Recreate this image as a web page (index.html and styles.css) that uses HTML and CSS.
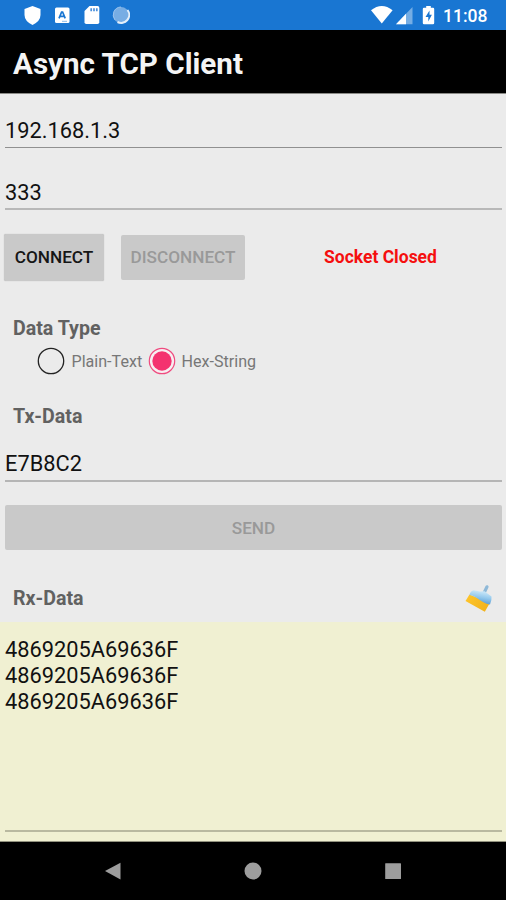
FILE: index.html
```html
<!DOCTYPE html>
<html lang="en">
<head>
<meta charset="utf-8">
<title>Async TCP Client</title>
<link rel="stylesheet" href="styles.css">
</head>
<body>
<div class="status-bar">
  <svg class="status-left" width="110" height="30" viewBox="0 0 110 30">
    <path d="M12.5 6 20.5 9v6q0 6-8 10-8-4-8-10V9z" fill="#fff"/>
    <rect x="35" y="7.500" width="14.5" height="15.500" rx="1.5" fill="#fff"/>
    <path d="M39 18.400 41.600 12h1l2.600 6.400M40 16.400h4.200" fill="none" stroke="#1976d2" stroke-width="1.7"/>
    <path d="M42 21.3h5" stroke="#8dbbe8" stroke-width="1"/>
    <path d="M69.500 6h8q1.800 0 1.800 1.800v14.400q0 1.800-1.800 1.800H66.300q-1.800 0-1.800-1.800V11z" fill="#fff"/>
    <path d="M71.200 8.300v3M74 8.300v3M76.800 8.300v3" stroke="#4a90dc" stroke-width="1.700"/>
    <circle cx="101" cy="15" r="8" fill="#77ade4"/>
    <path d="M107.500 10a8 8 0 0 1-10 12" fill="none" stroke="#e4effa" stroke-width="2"/>
    <path d="M95 20a8 8 0 0 1 6-13" fill="none" stroke="#9bc3ed" stroke-width="1"/>
  </svg>
  <div class="status-right">
    <svg width="66" height="30" viewBox="0 0 66 30">
      <path d="M0 10.300q10.800-8.600 21.600 0L10.800 23.600z" fill="#fff"/>
      <path d="M41.500 7v17.300H25z" fill="#75ade4"/>
      <path d="M35 13.800v10.500h-10z" fill="#fff"/>
      <path d="M55.200 6h4.600v1.700H62q1.200 0 1.200 1.200v14q0 1.400-1.200 1.400h-9q-1.200 0-1.200-1.400v-14q0-1.200 1.200-1.200h2.200z" fill="#fff"/>
      <path d="M58.500 10.500 54.500 17h2.800v4.500l3.600-6.800h-2.400z" fill="#1976d2"/>
    </svg>
    <span class="clock">11:08</span>
  </div>
</div>
<header class="title-bar"><h1>Async TCP Client</h1></header>
<main>
  <div class="field field-ip">192.168.1.3</div>
  <div class="field field-port">333</div>
  <div class="actions">
    <button class="btn btn-connect">CONNECT</button>
    <button class="btn btn-disconnect" disabled>DISCONNECT</button>
    <span class="socket-state">Socket Closed</span>
  </div>
  <h2 class="label label-type">Data Type</h2>
  <div class="radios">
    <svg width="28" height="28" viewBox="0 0 28 28"><circle cx="14" cy="14" r="12.700" fill="none" stroke="#222" stroke-width="1.300"/></svg>
    <span class="radio-plain">Plain-Text</span>
    <svg width="28" height="28" viewBox="0 0 28 28"><circle cx="14" cy="14" r="12.700" fill="#f7eef1" stroke="#ef4b7f" stroke-width="1.200"/><circle cx="14" cy="14" r="9.700" fill="#f4326f"/></svg>
    <span class="radio-hex">Hex-String</span>
  </div>
  <h2 class="label label-tx">Tx-Data</h2>
  <div class="field field-tx">E7B8C2</div>
  <button class="btn btn-send" disabled>SEND</button>
  <div class="rx-head">
    <h2 class="label">Rx-Data</h2>
    <svg width="28" height="28" viewBox="0 0 28 28">
      <defs>
        <linearGradient id="blue" x1="0.650" y1="0" x2="0.400" y2="1"><stop offset="0" stop-color="#d6eefb"/><stop offset="0.500" stop-color="#93c8ec"/><stop offset="1" stop-color="#4f92cd"/></linearGradient>
        <linearGradient id="gold" x1="0" y1="0" x2="1" y2="0.500"><stop offset="0" stop-color="#ffc62c"/><stop offset="1" stop-color="#f2b31c"/></linearGradient>
      </defs>
      <path d="M20 9 23 2.800" stroke="#8fb9d8" stroke-width="3.200" stroke-linecap="round"/>
      <path d="M5.500 10.500 1.500 17 20.800 27.800 25.800 19z" fill="url(#gold)"/>
      <path d="M5.500 11Q6 7.500 9.500 6.200L16 7.500 20.500 7.200 27.500 12.500Q28 16 26 20.500 22.500 20 19 18T12 13.500 5.500 11z" fill="url(#blue)"/>
    </svg>
  </div>
  <div class="rx-box">
    <div class="rx-text">4869205A69636F<br>4869205A69636F<br>4869205A69636F</div>
  </div>
</main>
<nav class="nav-bar">
  <svg width="18" height="18" viewBox="0 0 18 18"><path d="M1 9 16.500.7v16.800z" fill="#9d9d9d"/></svg>
  <svg width="18" height="18" viewBox="0 0 18 18"><circle cx="9" cy="9" r="8.500" fill="#9d9d9d"/></svg>
  <svg width="18" height="18" viewBox="0 0 18 18"><rect x="1.200" y="1.200" width="15.800" height="15.800" rx=".5" fill="#9d9d9d"/></svg>
</nav>
</body>
</html>
```
FILE: styles.css
```css
* { box-sizing: border-box; }
body {
  margin: 0;
  width: 506px;
  height: 900px;
  display: flex;
  flex-direction: column;
  overflow: hidden;
  background: #ebebeb;
  color: #111;
  font-family: Roboto, "Liberation Sans", sans-serif;
}
svg { display: block; flex: none; }
h1, h2 { margin: 0; }
.status-bar {
  height: 30px;
  flex: none;
  display: flex;
  justify-content: space-between;
  padding: 0 19px 0 20px;
  background: #1976d2;
}
.status-right { display: flex; }
.clock {
  width: 50px;
  padding-left: 6px;
  line-height: 32px;
  font-size: 17.5px;
  font-weight: 500;
  color: #fff;
}
.title-bar {
  height: 64px;
  flex: none;
  padding-left: 13px;
  background: #000;
  border-bottom: 1px solid #8a8a86;
}
.title-bar h1 {
  font-size: 29.6px;
  font-weight: 700;
  line-height: 68px;
  color: #f4f4f4;
  white-space: nowrap;
}
main {
  flex: 1;
  display: flex;
  flex-direction: column;
}
.field {
  margin: 0 4px 0 5px;
  font-size: 21.8px;
  line-height: 26px;
  white-space: nowrap;
}
.field-ip {
  height: 54px;
  padding-top: 24px;
  border-bottom: 1.5px solid #909090;
}
.field-port {
  height: 62px;
  padding-top: 32px;
  border-bottom: 2px solid #b8b8b8;
}
.actions {
  display: flex;
  align-items: center;
  height: 47px;
  margin-top: 24px;
  padding-left: 4px;
}
.btn {
  border: 0;
  padding: 0;
  border-radius: 2px;
  background: #c9c9c9;
  font-family: inherit;
  font-size: 17.2px;
  font-weight: 500;
  color: #999;
}
.btn-connect {
  width: 100px;
  height: 47px;
  padding-bottom: 2px;
  color: #161616;
  box-shadow: 0 0 1px #aaa;
}
.btn-disconnect {
  width: 124px;
  height: 45px;
  margin-left: 17px;
  padding-bottom: 2px;
}
.socket-state {
  margin-left: 79px;
  padding-bottom: 1px;
  font-size: 17.5px;
  font-weight: 700;
  color: #f50f0f;
  white-space: nowrap;
}
.label {
  font-size: 19.6px;
  font-weight: 700;
  line-height: 24px;
  color: #616161;
  padding-left: 13px;
}
.label-type { margin-top: 36px; }
.radios {
  display: flex;
  align-items: center;
  height: 28px;
  margin-top: 6px;
  padding-left: 37px;
  font-size: 16.1px;
  color: #777;
  white-space: nowrap;
}
.radio-plain { width: 82.5px; padding-left: 6.5px; }
.radio-hex { padding-left: 6px; }
.label-tx { margin-top: 30px; }
.field-tx {
  height: 53px;
  padding-top: 22px;
  border-bottom: 2px solid #b5b5b5;
}
.btn-send {
  height: 45px;
  margin: 23px 4px 0 5px;
}
.rx-head {
  height: 72px;
  display: flex;
  align-items: flex-start;
  justify-content: space-between;
  padding: 34px 14px 0 0;
}
.rx-head .label { padding-top: 3px; }
.rx-box {
  height: 220px;
  padding: 15px 4px 9px 5px;
  background: #f0f0d2;
  border-bottom: 1px solid #92927f;
}
.rx-text {
  height: 100%;
  font-size: 21.8px;
  line-height: 26.2px;
  border-bottom: 2px solid #b9b9a0;
}
.nav-bar {
  height: 58px;
  flex: none;
  display: flex;
  justify-content: space-between;
  align-items: center;
  padding: 0 104px 1px 104px;
  background: #000;
}
```
